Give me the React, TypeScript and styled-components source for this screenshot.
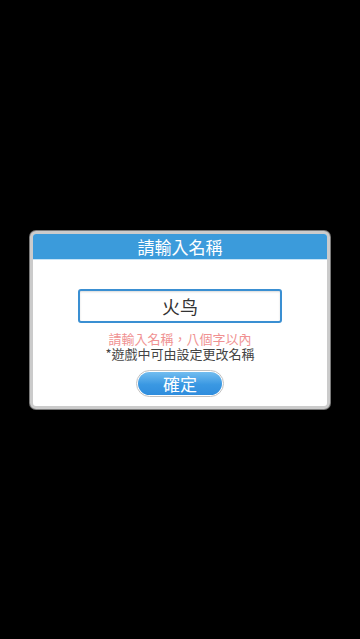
import { createGlobalStyle } from 'styled-components'
import styled from 'styled-components'

const GlobalStyle = createGlobalStyle`
	html, body {
		margin: 0;
		padding: 0;
		background: #000000;
	}
	body {
		font-family: "Noto Sans CJK TC", "Noto Sans", sans-serif;
	}
`

const Screen = styled.div`
	width: 360px;
	height: 639px;
	display: flex;
	align-items: center;
	justify-content: center;
	background: #000000;
`

const Dialog = styled.div`
	width: 294px;
	box-sizing: content-box;
	background: #ffffff;
	border: 3px solid #cbcbcb;
	border-radius: 6px;
	box-shadow: 0 0 0 1px #7a7a7a;
	display: flex;
	flex-direction: column;
`

const Header = styled.div`
	height: 25px;
	background: #3b9bdb;
	border-radius: 3px 3px 0 0;
	border-bottom: 1px solid #c6e3f6;
	color: #ffffff;
	font-size: 17px;
	line-height: 25px;
	text-align: center;
`

const Body = styled.div`
	height: 146px;
	display: flex;
	flex-direction: column;
	align-items: center;
	padding-top: 29px;
	box-sizing: border-box;
`

const NameInput = styled.div`
	width: 204px;
	height: 34px;
	box-sizing: border-box;
	border: 2px solid #3a8fd2;
	border-radius: 3px;
	box-shadow: inset 0 1px 2px rgba(0, 0, 0, 0.15);
	display: flex;
	align-items: center;
	justify-content: center;
	font-size: 18px;
	color: #333333;
`

const Hint = styled.div<{ $color: string; $top: number }>`
	margin-top: ${props => props.$top}px;
	font-size: 13px;
	line-height: 15px;
	color: ${props => props.$color};
`

const Button = styled.div`
	margin-top: 9px;
	width: 88px;
	height: 27px;
	box-sizing: border-box;
	border-radius: 14px;
	border: 1px solid #c2c2c2;
	padding: 1px;
	background: #ffffff;
	display: flex;
`

const ButtonFace = styled.div`
	flex: 1;
	border-radius: 12px;
	background: linear-gradient(#72bdf0, #3a98e2 55%, #2f8ddd);
	color: #ffffff;
	font-size: 17px;
	line-height: 23px;
	text-align: center;
`

export default function App() {
	return (
		<>
			<GlobalStyle />
			<Screen>
				<Dialog>
					<Header>請輸入名稱</Header>
					<Body>
						<NameInput>火鸟</NameInput>
						<Hint $color="#f09292" $top={8}>
							請輸入名稱，八個字以內
						</Hint>
						<Hint $color="#444444" $top={0}>
							*遊戲中可由設定更改名稱
						</Hint>
						<Button>
							<ButtonFace>確定</ButtonFace>
						</Button>
					</Body>
				</Dialog>
			</Screen>
		</>
	)
}
